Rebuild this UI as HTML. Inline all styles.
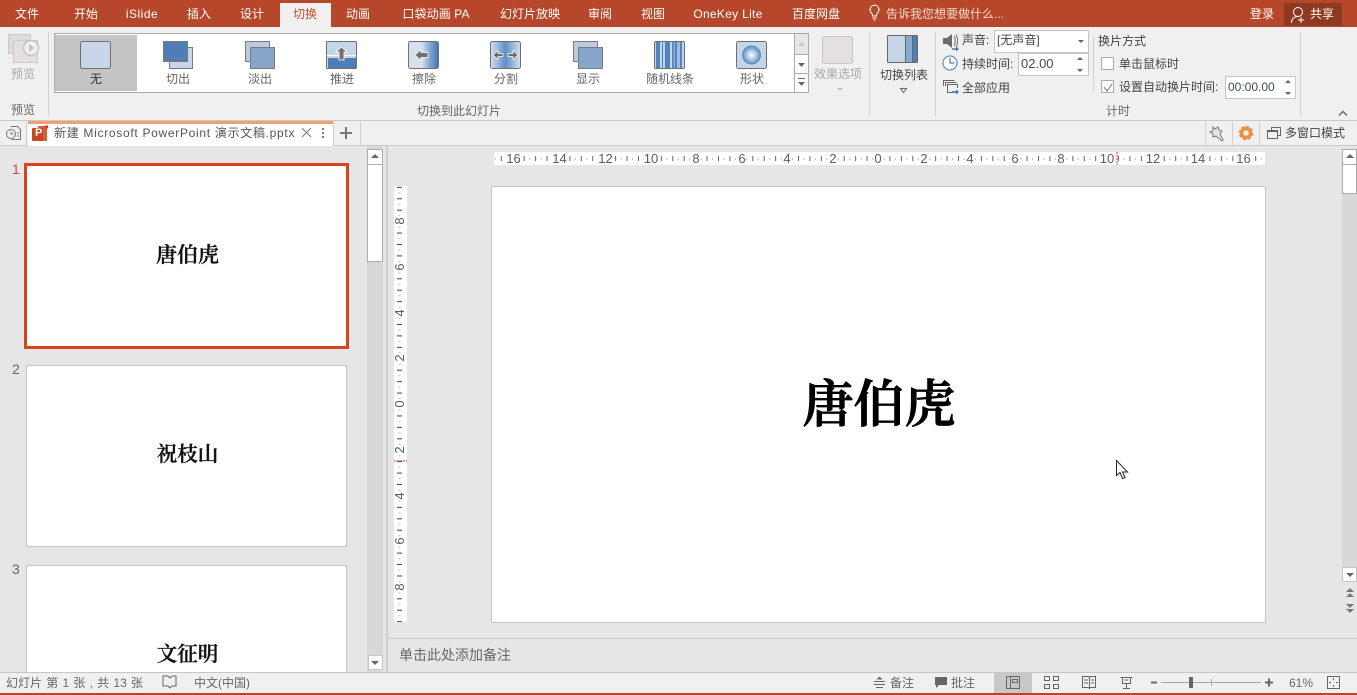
<!DOCTYPE html>
<html lang="zh"><head><meta charset="utf-8"><title>PowerPoint</title>
<style>
html,body{margin:0;padding:0;width:1357px;height:695px;overflow:hidden;background:#e6e6e6}
body{position:relative;font:12px/16px "Liberation Sans","Noto Sans CJK SC",sans-serif;color:#444}
.b{position:absolute;box-sizing:border-box}
.t{position:absolute;white-space:nowrap;line-height:16px;height:16px}
.c{transform:translateX(-50%)}
.w{color:#fff}
.g{color:#666}
.l{color:#a8a8a8}
svg{position:absolute;left:0;top:0}
.s{font-family:"Liberation Serif","Noto Serif CJK SC",serif;font-weight:600;color:#111;-webkit-text-stroke:.35px #111}
</style></head><body>
<div class="b" style="left:0;top:0;width:1357px;height:27px;background:#b7472a"></div>
<div class="b" style="left:280px;top:3px;width:51px;height:24px;background:#f0f0f0"></div>
<div class="b" style="left:1284px;top:3px;width:58px;height:23px;background:#8f3a20"></div>
<div class="b" style="left:0;top:27px;width:1357px;height:94px;background:#f0f0f0"></div>
<div class="b" style="left:0;top:120px;width:1357px;height:26px;background:#f0f0f0;border-top:1px solid #c9c9c9;border-bottom:1px solid #c9c9c9"></div>
<div class="b" style="left:28px;top:121px;width:305px;height:25px;background:#fff;border-top:3px solid #f0a073"></div>
<div class="b" style="left:54px;top:33px;width:755px;height:60px;background:#fff;border:1px solid #ababab"></div>
<div class="b" style="left:55px;top:35px;width:82px;height:56px;background:#c4c4c4"></div>
<div class="b" style="left:794px;top:33px;width:15px;height:22px;background:#e6e6e6;border:1px solid #ababab"></div>
<div class="b" style="left:794px;top:54px;width:15px;height:20px;background:#fff;border:1px solid #ababab"></div>
<div class="b" style="left:794px;top:73px;width:15px;height:20px;background:#fff;border:1px solid #ababab"></div>
<div class="b" style="left:994px;top:30px;width:95px;height:23px;background:#fff;border:1px solid #c6c6c6"></div>
<div class="b" style="left:1018px;top:53px;width:71px;height:23px;background:#fff;border:1px solid #c6c6c6"></div>
<div class="b" style="left:1225px;top:76px;width:71px;height:23px;background:#fff;border:1px solid #c6c6c6"></div>
<div class="b" style="left:1101px;top:57px;width:13px;height:13px;background:#fff;border:1px solid #ababab"></div>
<div class="b" style="left:1101px;top:80px;width:13px;height:13px;background:#fff;border:1px solid #ababab"></div>
<div class="b" style="left:0;top:146px;width:367px;height:526px;background:#e6e6e6"></div>
<div class="b" style="left:367px;top:146px;width:16px;height:526px;background:#d8d8d8"></div>
<div class="b" style="left:386px;top:146px;width:2px;height:526px;background:#cfcfcf"></div>
<div class="b" style="left:367px;top:149px;width:16px;height:16px;background:#fff;border:1px solid #ababab"></div>
<div class="b" style="left:367px;top:164px;width:16px;height:98px;background:#fff;border:1px solid #ababab"></div>
<div class="b" style="left:368px;top:655px;width:15px;height:15px;background:#fff;border:1px solid #c6c6c6"></div>
<div class="b" style="left:1342px;top:149px;width:15px;height:433px;background:#d8d8d8"></div>
<div class="b" style="left:1342px;top:149px;width:15px;height:16px;background:#fff;border:1px solid #ababab"></div>
<div class="b" style="left:1342px;top:164px;width:15px;height:30px;background:#fff;border:1px solid #ababab"></div>
<div class="b" style="left:1342px;top:567px;width:15px;height:15px;background:#fff;border:1px solid #c6c6c6"></div>
<div class="b" style="left:494px;top:152px;width:771px;height:13px;background:#fff"></div>
<div class="b" style="left:394px;top:186px;width:13px;height:436px;background:#fff"></div>
<div class="b" style="left:24px;top:163px;width:325px;height:186px;background:#fff;border:3px solid #d9431e"></div>
<div class="b" style="left:26px;top:365px;width:321px;height:182px;background:#fff;border:1px solid #c6c6c6"></div>
<div class="b" style="left:26px;top:565px;width:321px;height:120px;background:#fff;border:1px solid #c6c6c6"></div>
<div class="b" style="left:491px;top:186px;width:775px;height:437px;background:#fff;border:1px solid #c6c6c6"></div>
<div class="b" style="left:388px;top:638px;width:969px;height:1px;background:#c6c6c6"></div>
<div class="b" style="left:0;top:672px;width:1357px;height:21px;background:#f0f0f0;border-top:1px solid #c6c6c6"></div>
<div class="b" style="left:994px;top:673px;width:38px;height:20px;background:#c8c8c8"></div>
<div class="b" style="left:0;top:693px;width:1357px;height:2px;background:#b7472a"></div>

<svg width="1357" height="695" viewBox="0 0 1357 695" fill="none">
<defs>
<linearGradient id="wipe" x1="0" x2="1"><stop offset=".45" stop-color="#d5e0ee"/><stop offset=".7" stop-color="#88a9d0"/><stop offset="1" stop-color="#3f76b3"/></linearGradient>
<linearGradient id="split" x1="0" x2="1"><stop offset="0" stop-color="#d5e0ee"/><stop offset=".5" stop-color="#5f8fc3"/><stop offset="1" stop-color="#d5e0ee"/></linearGradient>
<radialGradient id="shape"><stop offset="0" stop-color="#fff"/><stop offset=".45" stop-color="#b9cde5"/><stop offset="1" stop-color="#4f86c0"/></radialGradient>
<pattern id="hr" x="878" y="152" width="11.43" height="13" patternUnits="userSpaceOnUse">
<rect x="0" y="4" width="1" height="5" fill="#666"/><rect x="5.5" y="6" width="1" height="2" fill="#bbb"/>
</pattern>
<pattern id="vr" x="394" y="404" width="13" height="11.43" patternUnits="userSpaceOnUse">
<rect x="3" y="0" width="5" height="1" fill="#444"/><rect x="4.500" y="5.500" width="2" height="1" fill="#bbb"/>
</pattern>
</defs>
<!-- separators -->
<g stroke="#d0d0d0">
<path d="M48.500 32V116M869.500 32V116M935.500 32V116M1300.500 32V116M1093.500 37V92"/>
<path d="M360.500 122V145M333.500 122V145M26.500 122V145M1205.500 122V145M1232.500 122V145M1259.500 122V145"/>
</g>
<!-- tell-me bulb, share -->
<g stroke="#fff" stroke-width="1">
<path d="M871.500 13a4.500 4.500 0 1 1 6 0c-.8.8-1 2-1 3h-4c0-1-.2-2.200-1-3zM872.500 18h4M873.500 20h2"/>
<circle cx="1298" cy="12" r="4.500"/><path d="M1291.500 23c0-4 2.500-6.500 6.500-6.500M1301 17v6M1298 20h6"/>
</g>
<!-- preview -->
<g>
<rect x="8.500" y="34.500" width="22" height="19" fill="#dcdcdc" stroke="#c8c8c8"/>
<rect x="13.500" y="40.500" width="24" height="22" fill="#e3dfe3" stroke="#c8c8c8"/>
<circle cx="31" cy="48" r="7.500" fill="#f0f0f0" stroke="#c4c4c4" stroke-width="1.500"/>
<path d="M29 44l5.500 4-5.500 4z" fill="#c4c4c4"/>
</g>
<!-- gallery icons -->
<rect x="80.500" y="41.500" width="30" height="27" rx="2" fill="#c6d5e8" stroke="#707070"/>
<g stroke="#7a7a7a">
<rect x="169.500" y="47.500" width="23" height="21" fill="#c6d5e8"/>
<rect x="163.500" y="41.500" width="24" height="20" fill="#4f7db5"/>
<rect x="245.500" y="41.500" width="24" height="20" fill="#bccce0"/>
<rect x="250.500" y="47.500" width="24" height="21" fill="#87a5c9"/>
<rect x="573.500" y="41.500" width="24" height="20" fill="#bccce0"/>
<rect x="578.500" y="47.500" width="24" height="21" fill="#87a5c9"/>
</g>
<g>
<rect x="326.500" y="41.500" width="30" height="27" rx="1" fill="#c6d5e8" stroke="#707070"/>
<rect x="328" y="58" width="28" height="10" fill="#4f7db5"/>
<rect x="327" y="55" width="29" height="1" fill="#fff"/>
<path d="M341.500 47l5.500 5h-3v8h-5v-8h-3z" fill="#707070" stroke="#fff" stroke-width=".8"/>
</g>
<g>
<rect x="408.500" y="41.500" width="30" height="27" rx="2" fill="url(#wipe)" stroke="#707070"/>
<path d="M415 55l6-5.500v3h7v5h-7v3z" fill="#707070" stroke="#fff" stroke-width=".8"/>
</g>
<g>
<rect x="490.500" y="41.500" width="30" height="27" rx="2" fill="url(#split)" stroke="#707070"/>
<path d="M493 55l5-4.500v3h5v3h-5v3zM518 55l-5-4.500v3h-5v3h5v3z" fill="#6f6a6a" stroke="#fff" stroke-width=".7"/>
</g>
<g>
<rect x="654.500" y="41.500" width="30" height="27" rx="1.500" fill="#c6d5e8" stroke="#707070"/>
<path d="M656 42h4v26h-4zM662 42h1v26h-1zM665 42h5v26h-5zM672 42h1.500v26H672zM675 42h2v26h-2zM680 42h2v26h-2z" fill="#4f86c0"/>
<path d="M673.500 42h1.500v26h-1.500zM677.500 42h2v26h-2z" fill="#8fb0d6"/>
</g>
<g>
<rect x="736.500" y="41.500" width="30" height="27" rx="2" fill="#c6d5e8" stroke="#707070"/>
<circle cx="751.500" cy="55" r="9.500" fill="url(#shape)"/>
</g>
<!-- gallery scroll arrows -->
<path d="M798 46l3.500-4 3.500 4z" fill="#c8c8c8"/>
<path d="M798 63h7l-3.500 4zM798 82h7l-3.500 4z" fill="#666"/>
<path d="M798 78.500h7" stroke="#666"/>
<!-- effect options -->
<rect x="822.500" y="36.500" width="30" height="27" rx="2" fill="#e3dfe3" stroke="#c6c6c6"/>
<path d="M837 88h6l-3 3z" fill="#c0c0c0"/>
<!-- transition list -->
<g stroke="#666">
<rect x="907.500" y="35.500" width="10" height="27" rx="1" fill="#4f7db5"/>
<rect x="900.500" y="35.500" width="12" height="27" rx="1" fill="#87a9d0"/>
<rect x="887.500" y="35.500" width="18" height="27" rx="1" fill="#c6d5e8"/>
<path d="M900.500 88.500h6l-3 4z" fill="#f0f0f0"/>
</g>
<!-- sound -->
<path d="M943 38h4l5-4v14l-5-4h-4z" fill="#6b6b6b"/>
<path d="M954 36c1.500 2 1.500 8 0 10M956 34.500c2 3 2 10 0 13" stroke="#6b6b6b"/>
<path d="M952 49h5" stroke="#3f76b3" stroke-width="1.500"/><path d="M956 46.500l3 2.500-3 2.500z" fill="#3f76b3"/>
<!-- clock -->
<circle cx="950" cy="63" r="7" fill="#fff" stroke="#5c94cc" stroke-width="1.200"/>
<path d="M950 58v5h4.500" stroke="#555"/>
<!-- apply all -->
<g stroke="#666"><path d="M943.500 86v-5.500h11M945.500 86v-3.500h11"/><path d="M957.500 88v-3.500h-10v8h7"/></g>
<path d="M952 92h5" stroke="#3f76b3" stroke-width="1.500"/><path d="M956 89.500l3 2.500-3 2.500z" fill="#3f76b3"/>
<!-- control arrows -->
<path d="M1078 40h6l-3 3z" fill="#666"/>
<path d="M1077 60l3-3 3 3zM1077 69h6l-3 3z" fill="#666"/>
<path d="M1285 83l3-3 3 3zM1285 92h6l-3 3z" fill="#666"/>
<path d="M1104 87l3 4 5-7" stroke="#888" stroke-width="1.200"/>
<path d="M1339 115.500l4-4 4 4" stroke="#666" stroke-width="1.500"/>
<!-- tab row -->
<g stroke="#777">
<path d="M10.500 126.500h7l3 3v10h-9"/><circle cx="11" cy="134" r="4.500" fill="#f0f0f0"/><path d="M11 131.500V134h2.500M17 133h2M17 136h2"/>
</g>
<rect x="32" y="128" width="11" height="13" rx="1" fill="#c8451f"/>
<rect x="38" y="126" width="9" height="15" fill="#c8451f" opacity=".85"/>
<circle cx="46.500" cy="127" r="1.800" fill="#c8451f"/>
<path d="M302 128l9 9M311 128l-9 9" stroke="#777"/>
<path d="M323 128v2M323 132v2M323 136v2" stroke="#555" stroke-width="1.500"/>
<path d="M346 127v12M340 133h12" stroke="#777" stroke-width="2"/>
<path d="M1213 127l2 2 3-2 1 3 3 1-2 3 3 6-1 1-6-5-3 1v-3l-3-2 3-1z" fill="#dfe5ee" stroke="#777"/>
<circle cx="1246" cy="133" r="4.500" stroke="#ea9145" stroke-width="3.500"/>
<circle cx="1246" cy="133" r="6.500" stroke="#ea9145" stroke-width="1.500" stroke-dasharray="3 2.100"/>
<g stroke="#666"><rect x="1271.500" y="127.500" width="9" height="8" fill="#f0f0f0"/><rect x="1267.500" y="130.500" width="10" height="8" fill="#f0f0f0"/><path d="M1267.500 131.500h10"/></g>
<!-- rulers -->
<rect x="494" y="152" width="771" height="13" fill="url(#hr)"/>
<rect x="394" y="186" width="13" height="436" fill="url(#vr)"/>
<path d="M1117 152v13" stroke="#d9431e" stroke-dasharray="2 1"/>
<path d="M394 461h13" stroke="#d9431e" stroke-dasharray="2 1"/>
<g fill="#fff">
<rect x="506" y="153" width="15" height="11"/><rect x="552" y="153" width="15" height="11"/><rect x="598" y="153" width="15" height="11"/><rect x="644" y="153" width="15" height="11"/>
<rect x="692" y="153" width="8" height="11"/><rect x="738" y="153" width="8" height="11"/><rect x="783" y="153" width="8" height="11"/><rect x="829" y="153" width="8" height="11"/><rect x="874" y="153" width="8" height="11"/><rect x="920" y="153" width="8" height="11"/><rect x="966" y="153" width="8" height="11"/><rect x="1011" y="153" width="8" height="11"/><rect x="1057" y="153" width="8" height="11"/>
<rect x="1100" y="153" width="15" height="11"/><rect x="1146" y="153" width="15" height="11"/><rect x="1191" y="153" width="15" height="11"/><rect x="1236" y="153" width="15" height="11"/>
<rect x="395" y="217" width="11" height="8"/><rect x="395" y="263" width="11" height="8"/><rect x="395" y="309" width="11" height="8"/><rect x="395" y="354" width="11" height="8"/><rect x="395" y="400" width="11" height="8"/><rect x="395" y="446" width="11" height="8"/><rect x="395" y="492" width="11" height="8"/><rect x="395" y="537" width="11" height="8"/><rect x="395" y="583" width="11" height="8"/>
</g>
<g font-family="Liberation Sans" font-size="13" fill="#5c5c5c" text-anchor="middle">
<text x="513.500" y="163">16</text><text x="559.500" y="163">14</text><text x="605.500" y="163">12</text><text x="651" y="163">10</text><text x="696" y="163">8</text><text x="742" y="163">6</text><text x="787" y="163">4</text><text x="833" y="163">2</text><text x="878" y="163">0</text><text x="924" y="163">2</text><text x="970" y="163">4</text><text x="1015" y="163">6</text><text x="1061" y="163">8</text><text x="1107" y="163">10</text><text x="1153" y="163">12</text><text x="1198" y="163">14</text><text x="1243.500" y="163">16</text>
<text transform="translate(404 221) rotate(-90)">8</text><text transform="translate(404 267) rotate(-90)">6</text><text transform="translate(404 313) rotate(-90)">4</text><text transform="translate(404 358) rotate(-90)">2</text><text transform="translate(404 404) rotate(-90)">0</text><text transform="translate(404 450) rotate(-90)">2</text><text transform="translate(404 496) rotate(-90)">4</text><text transform="translate(404 541) rotate(-90)">6</text><text transform="translate(404 587) rotate(-90)">8</text>
</g>
<!-- scrollbars -->
<path d="M371 158l4-4 4 4zM371 661h8l-4 4zM1346 158l4-4 4 4zM1346 573h8l-4 4z" fill="#666"/>
<path d="M1346 592l4-4 4 4zM1346 597l4-4 4 4zM1346 604l4 4 4-4zM1346 609l4 4 4-4z" fill="#777"/>
<!-- cursor -->
<path d="M1116.500 460.500v15l3.500-3 2.500 6 2.500-1-2.500-5.500h5z" fill="#fff" stroke="#223"/>
<!-- status bar -->
<g stroke="#666">
<path d="M163 676.500h5l2 2 2-2h4v10h-4l-2 2-2-2h-5z" transform="translate(0 -.5)"/>
<path d="M874 681.500h11M874 684.500h11M876 687.500h7"/>
<path d="M1006.500 676.500h13v12h-13zM1010.500 676.500v12M1012.500 679.500h5v3h-5z"/>
<path d="M1044.500 676.500h5v4h-5zM1053.500 676.500h5v4h-5zM1044.500 684.500h5v4h-5zM1053.500 684.500h5v4h-5z"/>
<path d="M1082.500 676.500h6l1 1 1-1h5v11h-5l-1 1-1-1h-6zM1089.500 677v11M1084 680h4M1084 683h4M1091 680h3M1091 683h3"/>
<path d="M1120.500 677.500h12M1122.500 677.500v6h8v-6M1124.500 680h4M1126.500 683.500v5M1123 688.500h7"/>
<rect x="1327.500" y="676.500" width="12" height="12"/><path d="M1333.500 678v2M1333.500 685v2M1329 682.500h2M1336 682.500h2"/>
</g>
<path d="M876.500 679.500l3-3 3 3z" fill="#666"/>
<path d="M935 677h12v8h-8l-3 3v-3h-1z" fill="#666"/>
<path d="M1151 682.500h6M1265 682.500h8M1269 678.500v8" stroke="#666" stroke-width="2"/>
<path d="M1161 682.500h100" stroke="#a6a6a6"/><path d="M1211.500 679v7" stroke="#a6a6a6"/>
<rect x="1189" y="677" width="4" height="11" fill="#666"/>
</svg>

<span class="t c w" style="left:27px;top:6px">文件</span>
<span class="t c w" style="left:86px;top:6px">开始</span>
<span class="t c w" style="left:142px;top:6px;letter-spacing:.5px">iSlide</span>
<span class="t c w" style="left:199px;top:6px">插入</span>
<span class="t c w" style="left:252px;top:6px">设计</span>
<span class="t c" style="left:305px;top:6px;color:#c8502e">切换</span>
<span class="t c w" style="left:358px;top:6px">动画</span>
<span class="t c w" style="left:436px;top:6px;letter-spacing:.1px">口袋动画 PA</span>
<span class="t c w" style="left:530px;top:6px">幻灯片放映</span>
<span class="t c w" style="left:600px;top:6px">审阅</span>
<span class="t c w" style="left:653px;top:6px">视图</span>
<span class="t c w" style="left:728px;top:6px;letter-spacing:.3px">OneKey Lite</span>
<span class="t c w" style="left:816px;top:6px">百度网盘</span>
<span class="t w" style="left:886px;top:6px;color:#f3d9cf">告诉我您想要做什么...</span>
<span class="t c w" style="left:1262px;top:6px">登录</span>
<span class="t c w" style="left:1322px;top:6px">共享</span>

<span class="t c l" style="left:23px;top:66px">预览</span>
<span class="t c g" style="left:23px;top:102px">预览</span>
<span class="t c g" style="left:96px;top:71px;color:#333">无</span>
<span class="t c g" style="left:178px;top:71px">切出</span>
<span class="t c g" style="left:260px;top:71px">淡出</span>
<span class="t c g" style="left:342px;top:71px">推进</span>
<span class="t c g" style="left:424px;top:71px">擦除</span>
<span class="t c g" style="left:506px;top:71px">分割</span>
<span class="t c g" style="left:588px;top:71px">显示</span>
<span class="t c g" style="left:670px;top:71px">随机线条</span>
<span class="t c g" style="left:752px;top:71px">形状</span>
<span class="t c g" style="left:459px;top:103px">切换到此幻灯片</span>
<span class="t c l" style="left:838px;top:66px">效果选项</span>
<span class="t c" style="left:904px;top:67px">切换列表</span>
<span class="t" style="left:962px;top:32px">声音:</span>
<span class="t" style="left:997px;top:32px">[无声音]</span>
<span class="t" style="left:962px;top:56px">持续时间:</span>
<span class="t" style="left:1021px;top:56px;color:#3f4c5c;font-size:13px">02.00</span>
<span class="t" style="left:962px;top:80px">全部应用</span>
<span class="t" style="left:1098px;top:33px">换片方式</span>
<span class="t" style="left:1119px;top:56px">单击鼠标时</span>
<span class="t" style="left:1119px;top:79px">设置自动换片时间:</span>
<span class="t" style="left:1228px;top:79px;color:#3f4c5c">00:00.00</span>
<span class="t c g" style="left:1118px;top:103px">计时</span>

<span class="t" style="left:35px;top:125px;color:#fff;font-size:11px;font-weight:700">P</span>
<span class="t" style="left:54px;top:125px;color:#555;letter-spacing:.7px">新建 Microsoft PowerPoint 演示文稿.pptx</span>
<span class="t" style="left:1285px;top:125px">多窗口模式</span>

<span class="t g" style="left:12px;top:161px;color:#c8502e;font-size:14px">1</span>
<span class="t g" style="left:12px;top:361px;font-size:14px">2</span>
<span class="t g" style="left:12px;top:561px;font-size:14px">3</span>
<span class="t c s" style="left:187.500px;top:242px;font-size:21px;line-height:26px;height:26px">唐伯虎</span>
<span class="t c s" style="left:187.500px;top:442px;font-size:20.500px;line-height:26px;height:26px">祝枝山</span>
<span class="t c s" style="left:187.500px;top:642px;font-size:20.500px;line-height:26px;height:26px">文征明</span>
<span class="t c s" style="left:879px;top:374px;font-size:51px;line-height:64px;height:64px;color:#000;-webkit-text-stroke:.9px #000">唐伯虎</span>
<span class="t g" style="left:399px;top:647px;font-size:14px">单击此处添加备注</span>

<span class="t g" style="left:6px;top:675px;word-spacing:.9px">幻灯片 第 1 张 , 共 13 张</span>
<span class="t g" style="left:194px;top:675px">中文(中国)</span>
<span class="t g" style="left:890px;top:675px">备注</span>
<span class="t g" style="left:951px;top:675px">批注</span>
<span class="t g" style="left:1289px;top:675px">61%</span>
</body></html>
